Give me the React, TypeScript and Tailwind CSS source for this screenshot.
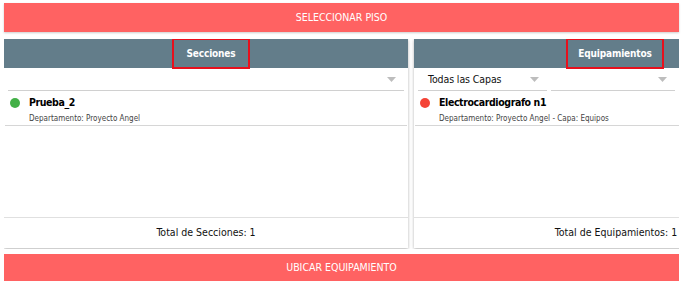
import React from "react";

const font = { fontFamily: '"DejaVu Sans Condensed", "DejaVu Sans", sans-serif' };

function Arrow() {
  return (
    <svg width="9" height="5" viewBox="0 0 9 5" className="shrink-0">
      <path d="M0 0 L9 0 L4.5 5 Z" fill="#bdbdbd" />
    </svg>
  );
}

function Select({ label, className }: { label?: string; className: string }) {
  return (
    <div className={`flex items-center justify-between h-[22px] border-b border-[#d0d0d0] pl-[10px] pr-[8px] ${className}`}>
      <span className="text-[10.5px] text-[#111] tracking-[-0.1px]">{label ?? ""}</span>
      <Arrow />
    </div>
  );
}

function Panel({
  title,
  titleClass,
  selects,
  dot,
  name,
  sub,
  total,
}: {
  title: string;
  titleClass: string;
  selects: React.ReactNode;
  dot: string;
  name: string;
  sub: string;
  total: string;
}) {
  return (
    <div className="w-[404px] shrink-0 bg-white flex flex-col shadow-[0_1px_3px_rgba(0,0,0,0.3)]">
      <div className="h-[29px] bg-[#637d8a] flex items-center justify-center">
        <span
          className={`h-[31px] -my-px border-2 border-[#e8101c] flex items-center text-white font-bold text-[10px] tracking-[-0.15px] ${titleClass}`}
        >
          {title}
        </span>
      </div>
      <div className="flex items-end h-[23px] px-1 gap-[4px]">{selects}</div>
      <div className="mx-[1px] border-b border-[#d6d6d6] h-[35px] flex flex-col pt-[6px]">
        <div className="flex items-center h-[11px]">
          <span className={`ml-[5px] w-[10px] h-[10px] rounded-full ${dot}`} />
          <span className="ml-[9px] text-[10.5px] font-bold text-black tracking-[-0.4px]">{name}</span>
        </div>
        <div className="ml-[24px] mt-[6px] text-[8px] text-[#444] leading-[10px]">{sub}</div>
      </div>
      <div className="flex-1" />
      <div className="h-[31px] border-t border-[#e0e0e0] flex items-center justify-center text-[10.5px] text-[#111]">
        {total}
      </div>
    </div>
  );
}

export default function App() {
  return (
    <div className="w-[685px] h-[288px] bg-white pl-1 pr-[6px] pt-[3px] overflow-hidden" style={font}>
      <div className="h-[29px] bg-[#ff6262] text-white text-[10.5px] flex items-center justify-center shadow-[0_1px_2px_rgba(0,0,0,0.2)]">
        SELECCIONAR PISO
      </div>
      <div className="mt-[7px] h-[210px] flex gap-[6px] overflow-hidden pb-px">
        <Panel
          title="Secciones"
          titleClass="ml-[10px] px-[12px]"
          selects={<Select className="flex-1" />}
          dot="bg-[#43b047]"
          name="Prueba_2"
          sub="Departamento: Proyecto Angel"
          total="Total de Secciones: 1"
        />
        <Panel
          title="Equipamientos"
          titleClass="mr-[2px] px-[10px]"
          selects={
            <>
              <Select label="Todas las Capas" className="w-[129px]" />
              <Select className="w-[124px]" />
              <Select className="flex-1" />
            </>
          }
          dot="bg-[#f44336]"
          name="Electrocardiografo n1"
          sub="Departamento: Proyecto Angel - Capa: Equipos"
          total="Total de Equipamientos: 1"
        />
      </div>
      <div className="mt-[5px] h-[27px] bg-[#ff6262] text-white text-[10.5px] flex items-center justify-center">
        UBICAR EQUIPAMIENTO
      </div>
    </div>
  );
}
